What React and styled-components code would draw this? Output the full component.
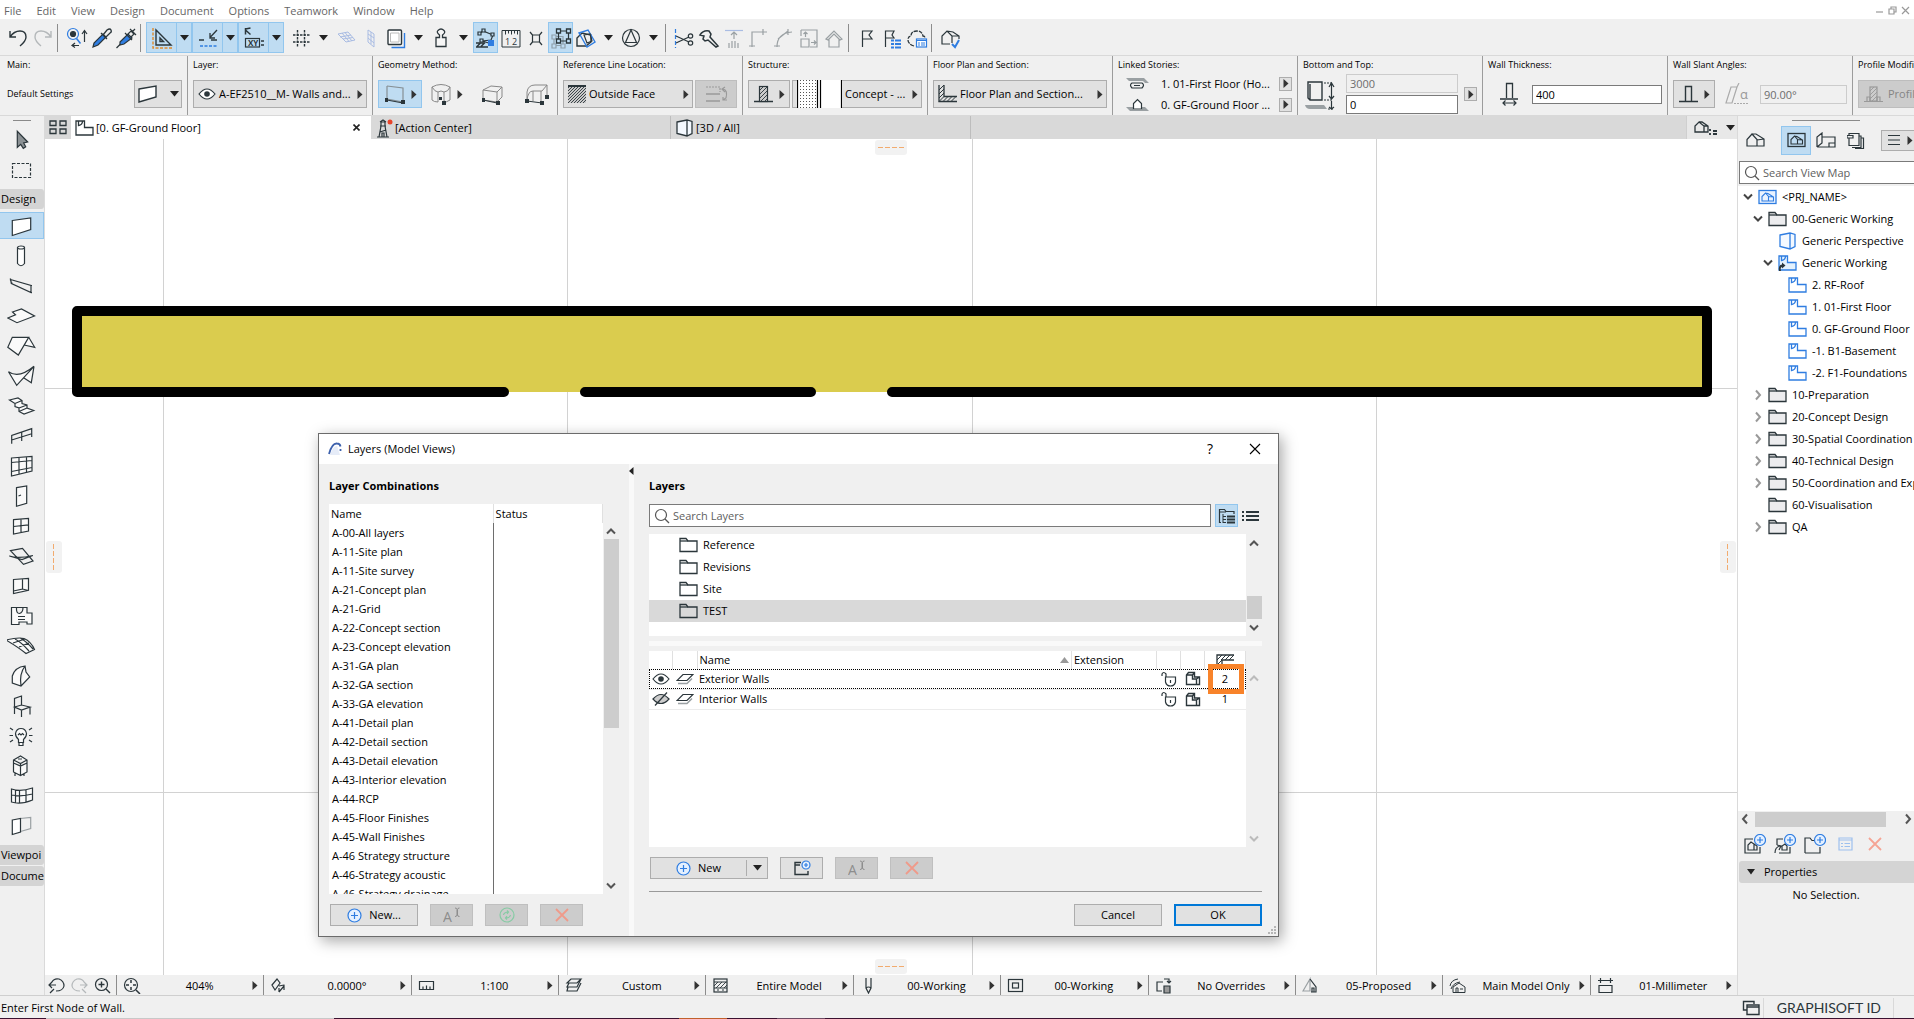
import React from "react";
import styled, { createGlobalStyle, css } from "styled-components";

const INK = "#2b363b";
const BLUE = "#2f7de1";
const SOFT = "#9aa0a3";

const GlobalStyle = createGlobalStyle`
    * {
        box-sizing: border-box;
    }
    body {
        margin: 0;
        font-family: "Segoe UI", "Open Sans", sans-serif;
        font-size: 11px;
        line-height: 16px;
        color: #000;
        background: #f0f0f0;
        overflow: hidden;
    }
    button, input {
        font: inherit;
        color: inherit;
        border-radius: 0;
        margin: 0;
    }
    button {
        padding: 0;
        border: 0;
        background: none;
        display: flex;
        align-items: center;
        justify-content: center;
        white-space: nowrap;
        flex: none;
    }
    svg {
        display: block;
        flex: none;
    }
`;

const Svg = ({ w = 24, h = 24, color = INK, weight = 1.2, children }) => (
    <svg
        width={w}
        height={h}
        viewBox={`0 0 ${w} ${h}`}
        fill="none"
        stroke={color}
        strokeWidth={weight}
        aria-hidden="true"
    >
        {children}
    </svg>
);

const Caret = () => <Svg w={9} h={6}><path d="M0 0h9L4.500 5.500z" fill="#222" stroke="none" /></Svg>;
const Play = () => <Svg w={6} h={9}><path d="M0.500 0v9L5.500 4.500z" fill="#333" stroke="none" /></Svg>;

const Chevron = ({ dir = "down", color = "#555" }) => {
    const paths = {
        down: "M2 3.500l4 4 4-4",
        up: "M2 8.500l4-4 4 4",
        left: "M8 1.500l-4 4.500 4 4.500",
        right: "M4 1.500l4 4.500-4 4.500"
    };
    return <Svg w={12} h={12} color={color} weight={2}><path d={paths[dir]} /></Svg>;
};

const Folder = ({ w = 19, fill = "#ececee" }) => (
    <Svg w={w} h={16} weight={1.3}>
        <path d="M1 14.500V1.500h6l2 2.500h9v10.500z" fill={fill} />
        <path d="M1 4h8" />
    </Svg>
);

const Plan = ({ color = BLUE, fill = "#fff", link }) => (
    <Svg w={19} h={16} color={color} weight={1.3}>
        <path d="M1 1h8.500v6.500H18v7.500H1z" fill={fill} />
        <path d="M3.500 1v4.500Q7.500 5 7.500 1" />
        {link && <path d="M1 16q-1-6 3-6.500V7.500l3.500 3L4 13.500V12q-2 .5-1 4z" fill={INK} stroke="none" />}
    </Svg>
);

const FramedHouse = ({ color = INK, fill = "none" }) => (
    <Svg w={19} h={16} color={color} weight={1.3}>
        <rect x="1" y="1.500" width="17" height="13" fill={fill} />
        <path d="M4 12V7.500l3.500-3.500 3 3.500V12zM7.500 4l2.500.5L15.500 8v4h-5M10.500 7.500l5 .5" strokeWidth="1.100" />
    </Svg>
);

const Magnifier = () => (
    <Svg w={16} h={16} color="#555"><circle cx="7" cy="7" r="5.500" /><path d="M11 11l4 4" /></Svg>
);

const Eye = () => (
    <Svg w={18} h={14}>
        <path d="M1 7q8-10 16 0q-8 10-16 0z" fill="#fff" />
        <circle cx="9" cy="7" r="2.800" fill={INK} stroke="none" />
    </Svg>
);

const EyeOff = () => (
    <Svg w={18} h={14}>
        <path d="M1 7q8-9 16 0q-8 9-16 0z" fill="#ccc" />
        <path d="M3 13.500L15 .5" />
    </Svg>
);

const PlusCircle = () => (
    <Svg w={15} h={15} color={BLUE}><circle cx="7.500" cy="7.500" r="6.500" fill="#e4f0ff" /><path d="M7.500 4v7M4 7.500h7" /></Svg>
);

const Cross = ({ color = "#ef9a8a" }) => (
    <Svg w={14} h={14} color={color} weight={1.800}><path d="M1 1l12 12M13 1L1 13" /></Svg>
);

const Rename = () => (
    <Svg w={18} h={16} color="#8d8d8d">
        <path d="M12 1q2 0 2 1.500V8q0 1.500-2 1.500M16.500 1q-2 0-2 1.500V8q0 1.500 2 1.500" strokeWidth="1" />
        <text x="0" y="15" fontSize="14" fill="#8d8d8d" stroke="none">A</text>
    </Svg>
);

const Hatch = ({ x, y, w, h, step = 4 }) => {
    let d = "";
    for (let s = step; s < w + h; s += step) {
        const x1 = Math.min(s, w), y1 = s - x1;
        const y2 = Math.min(s, h), x2 = s - y2;
        d += `M${x + x1} ${y + y1}L${x + x2} ${y + y2}`;
    }
    return <path d={d} strokeWidth="0.900" />;
};

/* main toolbar */
const toolIcons = {
    undo: <path d="M4 5v6h6M4 11Q8 5 14 5q6 0 6 6 0 4-6 9" strokeWidth="1.400" />,
    redo: <path d="M20 5v6h-6M20 11Q16 5 10 5q-6 0-6 6 0 4 6 9" stroke="#b4b8ba" strokeWidth="1.400" />,
    find: <>
        <circle cx="9" cy="8" r="5.500" stroke={BLUE} /><circle cx="9" cy="8" r="2.500" fill={INK} />
        <path d="M12.500 12.500l4 5" stroke={BLUE} strokeWidth="1.600" />
        <path d="M20.500 16V5M18 8l2.500-3.500L23 8M8 19.500h7M11 17l-3 2.500 3 2" />
    </>,
    dropper: <>
        <path d="M4 21l1-4L14 8l3 3-8 8z" fill={BLUE} /><path d="M12 7l6 6M14 9l4-5q3-2 4 0 1 2-1 3l-5 5" strokeWidth="1.300" />
    </>,
    inject: <>
        <path d="M2.500 22l4-4" /><path d="M6 16L14 8l4 4-8 6-4 1z" fill={BLUE} />
        <path d="M11 7l7 7M14 8l3-3 3 3-3 3M16 3l6 6M18 6l3-3" />
    </>,
    guide: <>
        <path d="M3 2v20h19" stroke="#e08a2c" strokeDasharray="3 1.500" strokeWidth="1.400" />
        <path d="M6 4v15h15zM10 12v3.500h3.500z" strokeWidth="1.400" />
    </>,
    snap: <>
        <path d="M3 14h5M15 14h6M14 11.500L21 4M14 7v5h5" strokeWidth="1.300" />
        <path d="M4 20h17" stroke={BLUE} strokeWidth="1.400" strokeDasharray="3 1.500" />
    </>,
    tracker: <>
        <path d="M3.500 8.500V2M3.500 3l5-1M3.500 4l5 4.500" strokeWidth="1.500" />
        <rect x="3.500" y="12.500" width="14" height="8.500" />
        <text x="6" y="20" fontSize="8" fontWeight="bold" fill={INK} stroke="none">XY</text>
        <path d="M19 15h3M19 19h3" strokeWidth="1.300" />
    </>,
    grid: <path d="M8.500 4v17M15.500 4v17M4 9h17M4 16h17" strokeWidth="1.400" strokeDasharray="2.500 1" />,
    planGrid: <path d="M4 8l10-2 7 8-9 2zM8 7l7 8.500M11 6.500l7 8.500M6 11l11-2M9 13l10-1.500" stroke="#a9bce3" strokeWidth="1" />,
    wallGrid: <path d="M9 4l6 4v13l-6-5zM12 6v12M9 8l6 4M9 12l6 5" stroke="#a9bce3" strokeWidth="1" />,
    trace: <>
        <path d="M20.500 7v14.500H7.500" stroke={BLUE} strokeWidth="1.400" /><rect x="4" y="4" width="13.500" height="14.500" rx="1" fill="#fff" strokeWidth="1.400" />
        <path d="M6.500 7v9h8.500V7z" stroke="#bbb" strokeWidth="1" />
    </>,
    weight: <path d="M10.500 11.500V9Q7 6 9 4.500q3-3 6 0 2 2-1.500 4.500v2.500h3.500v9H7v-9z" strokeWidth="1.300" fill="#f6f6f6" />,
    suspend: <>
        <path d="M5 8l4-3 10 4-2 5-9 1M8 15l10 3" />
        <path d="M4 6h3v3H4zM17 7h3v3h-3zM6 13h3v3H6zM8 3h3v3H8z" fill="#bfdcf2" />
        <path d="M2 21h12M3 20.500l4-4M7 20.500l4-4M2 17h8" strokeWidth="1.500" /><path d="M14 14h6v6h-6z" fill={BLUE} stroke="none" />
    </>,
    ruler: <>
        <path d="M3 4.500h18M3 4.500V21h18V4.500M6.500 4.500v4M9.500 4.500v3M12.500 4.500v4M15.500 4.500v3M18.500 4.500v4" strokeWidth="1" strokeDasharray="none" />
        <text x="6" y="19" fontSize="9" fill={INK} stroke="none">1</text>
        <text x="13" y="19" fontSize="9" fill={INK} stroke="none">2</text>
    </>,
    explode: <path d="M8.500 9h7v7h-7zM6 6l2.500 3M18 6l-2.500 3M6 19l2.500-3M18 19l-2.500-3" />,
    group: <>
        <path d="M5 10.500h9v9H5z" stroke="#8fa0ab" /><path d="M3 9h4v4H3zM12 18h4v4h-4zM3 18h4v4H3z" stroke="#8fa0ab" fill="#bfdcf2" />
        <path d="M9.500 5h10v10h-10z" /><path d="M7.500 3h4v4h-4zM17.500 3h4v4h-4zM17.500 13h4v4h-4zM7.500 13h4v4h-4z" fill="#bfdcf2" strokeWidth="1.300" />
    </>,
    cut3d: <>
        <path d="M3 20V12l5-5 9 2v7l-5 4z" strokeWidth="1.400" /><path d="M5 7l9-3 7 12-8 5z" stroke={BLUE} strokeWidth="1.400" />
        <path d="M10 9l6-1 2 7-5 2z" />
    </>,
    north: <><circle cx="12" cy="12" r="8.500" /><path d="M12 4l5.500 12.500h-11z" /></>,
    scissors: <>
        <path d="M3.500 3v19" stroke={BLUE} strokeDasharray="4 2" /><path d="M4 10l13 6M4 17l13-6" />
        <circle cx="18.500" cy="10" r="2.200" /><circle cx="18.500" cy="17" r="2.200" />
    </>,
    axe: <path d="M3 9q3-5 9-4l2 3-1 3 8 9-2 1-8-7-3 1-2-2 1-3z" strokeWidth="1.500" />,
    liftOff: <><path d="M3 4.500h18" stroke="#a9bce3" /><path d="M12 13V6M9 9l3-3 3 3M7 17v5M10 15v7M13 15v7M16 17v5" stroke={SOFT} /></>,
    corner: <path d="M5 21V6h15M16 3v6M2 20h6" stroke={SOFT} />,
    fillet: <path d="M5 21Q5 7 20 6M16 3v6M2 20h6M6 13l10-8" stroke={SOFT} />,
    resize: <path d="M4 4h16v17h-7M4 13h8v8H4zM4 4v6M8.500 11V6M6.500 8l2-2 2 2M14 16.500h5M17 14.500l2 2-2 2" stroke={SOFT} />,
    homeGray: <path d="M4 13l8-8 8 8-2 1-6-6-6 6zM7 13.500V21h10v-7.500" stroke={SOFT} />,
    flag: <path d="M7.500 21V5H17l-3 4 3 4H7.500" />,
    flagList: <>
        <path d="M5.500 21V5H14l-2 4 2 3H5.500" /><path d="M11 14.500h3M15 14.500h6M11 18h3M15 18h6M11 21.500h3M15 21.500h6" stroke={BLUE} strokeWidth="2" />
    </>,
    cloud: <>
        <path d="M9 20q-6-2-6-6 0-4 3-4 0-5 6-5 5 0 6 5 2 0 2 2" strokeWidth="1.300" strokeDasharray="4 1" />
        <rect x="11.500" y="13" width="10" height="8" stroke={BLUE} fill="#fff" /><path d="M11.500 14.500h10M13 17h2M16 17h4M13 19h2M16 19h4" stroke={BLUE} strokeWidth="1" />
    </>,
    houseCheck: <>
        <path d="M12 18H4v-8l5-5 5 5v7M9 5l6 1 6 4v3M14 10l7 0" /><path d="M14 18l3 3 4-7" stroke={BLUE} strokeWidth="2" />
    </>
};

const tools = [
    "undo", "redo", "|", "find", "dropper", "inject", "|",
    "*guide", "*snap", "*tracker", " ", "grid+", "planGrid", "wallGrid", "trace+", "weight+",
    "!suspend", "ruler", "explode", "!group", "cut3d+", "north+", "|",
    "scissors", "axe", "liftOff", "corner", "fillet", "resize", "homeGray", "|",
    "flag", "flagList", "cloud", "|", "houseCheck"
];

const Page = styled.div`
    height: 100vh;
    display: flex;
    flex-direction: column;
    position: relative;
`;

const MenuBar = styled.nav`
    display: flex;
    height: 19px;
    background: #fff;
    padding: 2px 4px 0;
    gap: 15px;
    align-items: center;
    a {
        color: #666;
        text-decoration: none;
    }
    .window-buttons {
        margin-left: auto;
        display: flex;
        gap: 4px;
    }
`;

const Toolbar = styled.div`
    display: flex;
    align-items: center;
    height: 37px;
    padding: 1px 5px 0;
    border-bottom: 1px solid #d9d9d9;
`;

const ToolButton = styled.button`
    width: ${p => p.$narrow ? "15px" : p.$wide ? "31px" : "25px"};
    height: 31px;
    ${p => p.$on && css`
        background: #bfdcf2;
        border: 1px solid #92c6ee;
    `}
    ${p => p.$on && p.$narrow && css`
        border-left: 0;
    `}
`;

const CaretButton = styled.button`
    width: 20px;
    height: 30px;
`;

const ToolSeparator = styled.span`
    width: 1px;
    height: 28px;
    background: #8c8c8c;
    margin: 0 5px 0 2px;
`;

const ToolGap = styled.span`
    width: 4px;
`;

const Tool = ({ id }) => {
    if (id === "|") return <ToolSeparator />;
    if (id === " ") return <ToolGap />;
    const name = id.replace(/[*+!]/g, "");
    const icon = <Svg>{toolIcons[name]}</Svg>;
    if (id[0] === "*") {
        return <>
            <ToolButton $on $wide aria-label={name}>{icon}</ToolButton>
            <ToolButton $on $narrow aria-label={name + " options"}><Caret /></ToolButton>
        </>;
    }
    return <>
        <ToolButton $on={id[0] === "!"} aria-label={name}>{icon}</ToolButton>
        {id.endsWith("+") && <CaretButton aria-label={name + " options"}><Caret /></CaretButton>}
    </>;
};

/* info box */
const InfoBox = styled.div`
    display: flex;
    height: 60px;
    border-bottom: 1px solid #d9d9d9;
    overflow: hidden;
`;

const InfoSection = styled.section`
    width: ${p => p.$first ? "188px" : "185px"};
    flex: none;
    padding: 0 5px ${p => p.$first ? "0 7px" : ""};
    border-right: 1px solid #9c9c9c;
    display: flex;
    flex-direction: column;
`;

const InfoTitle = styled.h2`
    margin: 0;
    padding-top: 2px;
    font-size: 9px;
    font-weight: 400;
    line-height: 14px;
    white-space: nowrap;
`;

const InfoRow = styled.div`
    display: flex;
    align-items: center;
    flex: 1;
    gap: ${p => p.$gap || 2}px;
    padding-top: 1px;
    small {
        font-size: 9px;
        flex: 1;
    }
`;

const Stack = styled.div`
    display: flex;
    flex-direction: column;
    flex: 1;
    gap: 2px;
`;

const BoxButton = styled.button`
    height: 28px;
    padding: 0 3px 0 4px;
    gap: 3px;
    border: 1px solid ${p => p.$off ? "#bdbdbd" : p.$on ? "#92c6ee" : "#adadad"};
    background: ${p => p.$off ? "#cccccc" : p.$on ? "#bfdcf2" : "#e1e1e1"};
    color: ${p => p.$off ? "#858585" : "#000"};
    ${p => p.$grow && "flex: 1; min-width: 0;"}
    ${p => p.$width && `width: ${p.$width}px; gap: 6px;`}
    span {
        flex: 1;
        text-align: left;
    }
`;

const PlainButton = styled.button`
    height: 28px;
    width: ${p => p.$width || 44}px;
    gap: 5px;
`;

const MiniButton = styled.button`
    width: 13px;
    height: 14px;
    border: 1px solid #adadad;
    background: #e1e1e1;
`;

const Field = styled.input`
    height: 19px;
    width: 100%;
    min-width: 0;
    padding: 0 3px;
    border: 1px solid #7a7a7a;
    background: #fff;
    &:disabled {
        border-color: #ccc;
        background: #f0f0f0;
        color: #6d6d6d;
    }
`;

const StoryLine = styled.div`
    display: flex;
    align-items: center;
    height: 19px;
    padding: 0 0 0 8px;
    span {
        flex: 1;
        padding-left: 12px;
        white-space: nowrap;
    }
`;

const SlotDivider = styled.i`
    width: 1px;
    height: 22px;
    background: #adadad;
`;

const WallShape = () => <Svg w={20} h={20} weight={1.4}><path d="M1 5l17-3v11L1 18z" fill="#fff" /></Svg>;

const InfoSections = () => (
    <InfoBox>
        <InfoSection $first>
            <InfoTitle>Main:</InfoTitle>
            <InfoRow>
                <small>Default Settings</small>
                <BoxButton $width={48} aria-label="Default wall"><WallShape /><SlotDivider /><Caret /></BoxButton>
            </InfoRow>
        </InfoSection>
        <InfoSection>
            <InfoTitle>Layer:</InfoTitle>
            <InfoRow><BoxButton $grow><Eye /><span>A-EF2510__M- Walls and...</span><Play /></BoxButton></InfoRow>
        </InfoSection>
        <InfoSection>
            <InfoTitle>Geometry Method:</InfoTitle>
            <InfoRow>
                <BoxButton $on $width={44} aria-label="Straight">
                    <Svg w={20} h={22} color="#868f94"><path d="M2 3l16 2v14" /><path d="M2 3v13l16 3" /><path d="M2 17l16 3" stroke={INK} /><path d="M0 15h3v4H0zM16 17h4v4h-4z" fill={INK} stroke="none" /></Svg>
                    <Play />
                </BoxButton>
                <PlainButton aria-label="Curved">
                    <Svg w={22} h={22} color="#888" weight={1}><path d="M2 4q9-5 18 0v13q-4 3-6 1V9q-3-2-6 0v10q-4 0-6-2zM2 4q3 5 6 5M20 4q-2 5-6 5" /><path d="M9 14h3v3H9zM12 18h4v4h-4z" fill={INK} stroke="none" /></Svg>
                    <Play />
                </PlainButton>
                <PlainButton $width={45} aria-label="Trapezoid">
                    <Svg w={24} h={22} color="#888" weight={1}><path d="M2 7l8-4 11 1v10l-5 5-14-2zM2 7l14 2 5-5M16 9v10" /><path d="M2 17l14 3" stroke={INK} /><path d="M1 15h3v4H1zM15 18h4v4h-4z" fill={INK} stroke="none" /></Svg>
                </PlainButton>
                <PlainButton $width={40} aria-label="Polygon">
                    <Svg w={26} h={22} color="#888" weight={1}><path d="M3 17V9q1-7 8-7h12l-5 6H9q-5 0-6 9M17 8v12M23 2v11M9 8v10" /><path d="M3 18l15 2" stroke={INK} /><path d="M1 16h4v4H1zM16 18h4v4h-4zM21 12h4v4h-4z" fill={INK} stroke="none" /></Svg>
                </PlainButton>
            </InfoRow>
        </InfoSection>
        <InfoSection>
            <InfoTitle>Reference Line Location:</InfoTitle>
            <InfoRow>
                <BoxButton $grow>
                    <Svg w={18} h={18}><rect width="18" height="18" fill="#c9c9c9" stroke="none" /><Hatch x={0} y={0} w={18} h={18} step={3} /><path d="M0 1h18" strokeWidth="2" /></Svg>
                    <span>Outside Face</span><Play />
                </BoxButton>
                <BoxButton $off $width={42} disabled aria-label="Flip">
                    <Svg w={24} h={18} color="#999"><path d="M1 9h14M1 16h14" strokeWidth="1.600" /><path d="M1 2h14v5" strokeDasharray="2 1" /><path d="M18 4q5 1 3 9l-3 2M20 2l-3 2 3 3M18 12v3h4" /></Svg>
                </BoxButton>
            </InfoRow>
        </InfoSection>
        <InfoSection>
            <InfoTitle>Structure:</InfoTitle>
            <InfoRow>
                <BoxButton $width={42} aria-label="Basic structure">
                    <Svg w={19} h={18}><path d="M0 16.500h19" strokeWidth="1.500" /><rect x="5.500" y="1.500" width="8" height="15" fill="#ccc" /><Hatch x={5.5} y={1.5} w={8} h={15} /></Svg>
                    <Play />
                </BoxButton>
                <BoxButton $grow>
                    <Svg w={45} h={28}>
                        <defs>
                            <pattern id="dots" width="3" height="3" patternUnits="userSpaceOnUse"><rect width="1" height="1" fill="#555" stroke="none" /></pattern>
                        </defs>
                        <rect width="45" height="28" fill="#fff" stroke="none" />
                        <rect x="1" width="19" height="28" fill="url(#dots)" stroke="none" />
                        <path d="M.5 0v28M20.500 0v28M23.500 0v28M44.500 0v28" stroke="#000" />
                    </Svg>
                    <span>Concept - ...</span><Play />
                </BoxButton>
            </InfoRow>
        </InfoSection>
        <InfoSection>
            <InfoTitle>Floor Plan and Section:</InfoTitle>
            <InfoRow>
                <BoxButton $grow>
                    <Svg w={19} h={18}><path d="M1 0v16.500h18M6 0v11.500h13" strokeWidth="1.300" /><path d="M1 5l5-5M1 9l5-5M1 13l5-5M1 16.500l5-5M5 16.500l5-5M9 16.500l5-5M13 16.500l5-5" strokeWidth="1" /></Svg>
                    <span>Floor Plan and Section...</span><Play />
                </BoxButton>
            </InfoRow>
        </InfoSection>
        <InfoSection>
            <InfoTitle>Linked Stories:</InfoTitle>
            <InfoRow>
                <Stack>
                    <StoryLine>
                        <Svg w={23} h={14}><path d="M0 1h18l5 5h-4l-2-2H3z" fill={SOFT} stroke="none" /><path d="M12 6H6q-3 2 0 5h6M8 8.500h6M9 6h7q3 2 0 5h-4" /></Svg>
                        <span>1. 01-First Floor (Ho...</span>
                        <MiniButton aria-label="Top story"><Play /></MiniButton>
                    </StoryLine>
                    <StoryLine>
                        <Svg w={23} h={14}><path d="M0 9h7v3h9V9h3l4 4H4z" fill={SOFT} stroke="none" /><path d="M7.500 11V5.500l4-4 4 4V11z" fill="#fff" /></Svg>
                        <span>0. GF-Ground Floor ...</span>
                        <MiniButton aria-label="Home story"><Play /></MiniButton>
                    </StoryLine>
                </Stack>
            </InfoRow>
        </InfoSection>
        <InfoSection>
            <InfoTitle>Bottom and Top:</InfoTitle>
            <InfoRow $gap={6}>
                <Svg w={37} h={32}>
                    <path d="M5 4h14v18H7l-2-2zM7 6v16" strokeWidth="1.400" /><path d="M2 27h19l3 4H7q-4 0-5-4z" fill={SOFT} stroke="none" />
                    <path d="M21 5h9M21 22h9M25 31h5" strokeDasharray="2 1" /><path d="M28.500 6v15M26 9l2.500-4 2.500 4M26 18l2.500 3 2.500-3M28.500 23v8M26 29l2.500 2 2.500-2" />
                </Svg>
                <Stack>
                    <Field aria-label="Top offset" disabled defaultValue="3000" />
                    <Field aria-label="Bottom offset" defaultValue="0" />
                </Stack>
                <MiniButton aria-label="Offset options"><Play /></MiniButton>
            </InfoRow>
        </InfoSection>
        <InfoSection>
            <InfoTitle as="label" htmlFor="thickness">Wall Thickness:</InfoTitle>
            <InfoRow $gap={12}>
                <Svg w={32} h={24}><path d="M12 17h18M18.500 16V1.500h6V16" strokeWidth="1.300" /><path d="M15 21h13M17.500 18.500L15 21l2.500 2.500M25.500 18.500L28 21l-2.500 2.500" /></Svg>
                <Field id="thickness" defaultValue="400" />
            </InfoRow>
        </InfoSection>
        <InfoSection>
            <InfoTitle as="label" htmlFor="slant">Wall Slant Angles:</InfoTitle>
            <InfoRow $gap={10}>
                <BoxButton $width={42} aria-label="Vertical wall">
                    <Svg w={19} h={18}><path d="M0 16.500h19M6.500 16.500V1.500h6v15" strokeWidth="1.400" /></Svg>
                    <Play />
                </BoxButton>
                <Svg w={25} h={22} color="#aaa"><path d="M1 20L6 4h6L7 20zM12 4l2-4" /><path d="M9 20.500h15" strokeDasharray="2 1" /><text x="15" y="16" fontSize="13" fill="#999" stroke="none">α</text></Svg>
                <Field id="slant" disabled defaultValue="90.00°" />
            </InfoRow>
        </InfoSection>
        <InfoSection>
            <InfoTitle>Profile Modifiers:</InfoTitle>
            <InfoRow>
                <BoxButton $off $grow disabled>
                    <Svg w={22} h={18} color="#999"><path d="M1 16.500h19M4 16v-4h3v4M14 16v-4h3v4" /><rect x="7" y="2" width="7" height="14" /><Hatch x={7} y={2} w={7} h={14} /></Svg>
                    <span>Profile Modifiers...</span><Play />
                </BoxButton>
            </InfoRow>
        </InfoSection>
    </InfoBox>
);

/* design palette, every drawing sits on a 30 by 24 board */
const paletteIcons = {
    arrow: <path d="M10.300 3.300V19.300l3.400-3 2.600 4 2.400-1.600-2-3.700 4-1z" fill="#8b9194" />,
    marquee: <rect x="5.500" y="5.500" width="18" height="14" strokeDasharray="3 1.500" />,
    wall: <path d="M5.300 6.500L23.700 4v11.500l-18.400 6z" fill="#fff" />,
    column: <><path d="M10.500 3.500v16q3.500 4.500 7 0v-16" fill="#fff" /><ellipse cx="14" cy="3.500" rx="3.500" ry="1.500" fill="#fff" /></>,
    beam: <path d="M3.500 5.500L24 11.500v7L4.500 9.500zM3.500 4.500v2M3.500 9h2M23 11.500h2M23 18.500h2" />,
    slab: <path d="M5.500 8l9-3 13 7-17.500 6.700L.8 14l7.700-3.300z" fill="#fafafa" />,
    roof: <path d="M5.300 3.300h16.400L11.300 21 .8 13.300zM21.700 3.300l6 10L17 11" fill="#fafafa" />,
    shell: <path d="M1.500 7.700Q12 15 27 2.300L9.700 21.300zM27 2.300l-2.700 16.400L17 14" fill="#fafafa" />,
    stair: <path d="M2.500 6L11 4l4 2.500v3l5 1.500v3l6.700 2.500L17 20l-5-2.500V14l-4-1.500v-3zM8 9.500l7-3M12 14l8-3M12 17.500l8-3.500" fill="#fafafa" />,
    railing: <path d="M4.700 19.700v-8.200l20-6.800V13M14.700 8v9M4.700 16l20-6.300" />,
    curtainWall: <path d="M4.500 4L25 2.500V17L4.500 22zM12 3.500V20M19.500 3v15.500M4.500 8.500l20.500-2M4.500 17.500L25 13.500" fill="#fafafa" />,
    door: <path d="M9.500 3.700L19.700 2v17.300L9.500 22.300zM11.500 12l2.500-1" fill="#fafafa" />,
    window: <path d="M6.500 5.700l15-1.400V17l-15 3zM14 5v13.500M6.500 12.500l15-1.700" fill="#fafafa" />,
    skylight: <path d="M3.500 6.700l12-2.400L26 17l-9.500 3.300zM2.300 12q9 3 23.500-.5L15 15.500z" />,
    opening: <path d="M6.500 5.500l15-1.200v12l-15 3.200zM15.500 5v10l-9 2M15.500 15l6 1.500" fill="#fafafa" />,
    zone: <path d="M4.500 3.500h5q-.5 6 3 6 3.500-1 3.500-6h4V9h5v11h-5v-2h-8v2.500H4.500zM9.500 3.500h6M11 12.500h7M11 15.500h7" fill="#fafafa" />,
    mesh: <path d="M-1 6q12-3 18-1.500 7 3 10.500 11L19 19.500Q11 13-1 6zM8 5q6 3 14 12M13 4q6 3 13 11M6 9l12-4M12 13l10-4" fill="#fafafa" />,
    morph: <path d="M5.300 19v-7Q8 3 18 2l1 6 3.700 5L14 22zM18 2q-6 8-4 20" fill="#fafafa" />,
    object: <path d="M7.500 20V4.500L14.500 2v9M7.500 13l7-2 8.500 2-8.500 3zM23 13v7.500M14.500 16v7" />,
    lamp: <><path d="M11.500 15.500q-3-2.500-3-6 1-5 5.500-5t5.500 5q0 3.500-3 6v3h-5zM12 18.500v3h4v-3M11 11l1.500-1.500L14 11l1.500-1.500L17 11" fill="#fafafa" /><path d="M3 4l3 2M25 4l-3 2M2.500 11.500H6M25.500 11.500H22M3 18l3-2M25 18l-3-2" /></>,
    equipment: <path d="M6.500 6l7-4 6.500 4v12l-6.500 3.500-7-3.500zM6.500 6l7 3.500L20 6M13.500 9.500V21M6.500 9l7 3 6.500-3M11 5h4M8 19v3M17 20v2" fill="#fafafa" />,
    system: <path d="M4.500 5q9 3 21-1v12q-12 5-21 2zM8.500 6v12.500M12.500 6v13M19 5.500V18M4.500 11q10 2 21-1" fill="#fafafa" />,
    end: <><path d="M13.500 4.500L23.700 3.500v11l-10.200 3" stroke={SOFT} /><path d="M5.300 6l8.200-1.500v13.500l-8.200 2.500z" fill="#fff" /></>
};

const Palette = styled.aside`
    width: 45px;
    flex: none;
    border-right: 1px solid #dadada;
    display: flex;
    flex-direction: column;
`;

const Grip = styled.i`
    height: 1px;
    width: ${p => p.$width}px;
    background: #8a8a8a;
    margin: 4px auto ${p => p.$after || 0}px;
    flex: none;
`;

const PaletteButton = styled.button`
    height: 30px;
    width: 44px;
    padding-right: 1px;
`;

const PaletteActive = styled(PaletteButton)`
    height: 27px;
    margin: 3px 0 2px;
    background: #bfdcf2;
    border: 1px solid #92c6ee;
    border-left: 0;
    padding: 0;
`;

const PaletteHeader = styled.button`
    height: 20px;
    justify-content: flex-start;
    padding-left: 1px;
    background: #d4d4d4;
    border-radius: 0 3px 3px 0;
    margin-top: ${p => p.$gap || 0}px;
    width: 44px;
`;

const PaletteTools = () => (
    <Palette>
        <Grip $width={18} $after={4} />
        {["arrow", "marquee"].map(n => <PaletteButton key={n} aria-label={n}><Svg w={30}>{paletteIcons[n]}</Svg></PaletteButton>)}
        <PaletteHeader $gap={4}>Design</PaletteHeader>
        <PaletteActive aria-label="wall"><Svg w={30}>{paletteIcons.wall}</Svg></PaletteActive>
        {Object.keys(paletteIcons).slice(3).map(n => (
            <PaletteButton key={n} aria-label={n}><Svg w={30}>{paletteIcons[n]}</Svg></PaletteButton>
        ))}
        <PaletteHeader $gap={4}>Viewpoi</PaletteHeader>
        <PaletteHeader $gap={1}>Docume</PaletteHeader>
    </Palette>
);

/* tabs and drawing area */
const Workspace = styled.div`
    flex: 1;
    min-height: 0;
    display: flex;
`;

const Center = styled.main`
    flex: 1;
    min-width: 0;
    display: flex;
    flex-direction: column;
`;

const TabBar = styled.div`
    height: 23px;
    display: flex;
    background: #d9d9d9;
    flex: none;
`;

const Tab = styled.button`
    width: 300px;
    justify-content: flex-start;
    padding: 0 10px 0 4px;
    gap: 2px;
    background: ${p => p.$active ? "#fff" : "#d9d9d9"};
    border-right: 1px solid ${p => p.$active ? "#fff" : "#bdbdbd"};
    > svg:last-child:not(:first-child) {
        margin-left: auto;
    }
`;

const TabFiller = styled.div`
    flex: 1;
    border-right: 1px solid #cfcfcf;
`;

const TabIconCell = styled.button`
    width: ${p => p.$width}px;
    gap: 9px;
    padding-left: ${p => p.$light ? 5 : 0}px;
    background: ${p => p.$light ? "#e8e8e8" : "#d9d9d9"};
`;

const Canvas = styled.div`
    flex: 1;
    min-height: 0;
    background: #fff;
    position: relative;
    overflow: hidden;
    > svg {
        position: absolute;
        left: 0;
        top: 0;
    }
`;

const EdgeHandle = styled.div`
    position: absolute;
    display: flex;
    align-items: center;
    justify-content: center;
    background: #f2f2f2;
    border-radius: 3px;
    ${p => (p.$edge === "top" || p.$edge === "bottom") ? css`
        width: 32px;
        height: 15px;
        left: calc(50% - 16px);
    ` : css`
        width: 16px;
        height: 32px;
        top: calc(50% - 16px);
    `}
    ${p => p.$edge}: 1px;
`;

const Handle = ({ edge }) => (
    <EdgeHandle $edge={edge}>
        {edge === "top" || edge === "bottom"
            ? <Svg w={26} h={2} color="#f2ab6e" weight={1}><path d="M0 .5h26" strokeDasharray="5 2" /></Svg>
            : <Svg w={2} h={26} color="#f2ab6e" weight={1}><path d="M.5 0v26" strokeDasharray="5 2" /></Svg>}
    </EdgeHandle>
);

const Drawing = () => (
    <Canvas>
        <svg width="100%" height="100%" aria-hidden="true">
            <path d="M118.500 0v2000M522.500 0v2000M927.500 0v2000M1331.500 0v2000M0 249.500h4000M0 653.500h4000" stroke="#d2d2d2" fill="none" />
            <path d="M32 172H1662V253H32z" fill="#dacc4e" />
            <path d="M459 253H32V172H1662V253H847M540 253H766" stroke="#000" strokeWidth="10" strokeLinecap="round" strokeLinejoin="round" fill="none" />
        </svg>
        {["top", "bottom", "left", "right"].map(e => <Handle key={e} edge={e} />)}
    </Canvas>
);

/* quick options */
const QuickBar = styled.div`
    height: 20px;
    flex: none;
    display: flex;
    align-items: center;
    background: #f0f0f0;
`;

const QuickTools = styled.div`
    width: 72px;
    flex: none;
    display: flex;
    align-items: center;
    border-right: 1px solid #8c8c8c;
    button {
        width: 23px;
        height: 20px;
    }
`;

const QuickCell = styled.button`
    flex: 1;
    height: 20px;
    padding-top: 1px;
    border-right: 1px solid #8c8c8c;
    &:last-child {
        border-right: 0;
    }
    i {
        width: 30px;
        display: flex;
        justify-content: center;
    }
    span {
        flex: 1;
    }
    > svg {
        margin-right: 5px;
    }
`;

const quickIcons = {
    fit: <><circle cx="8" cy="8" r="6.500" /><path d="M13 13l4 4M8 3v3M8 10v3M3 8h3M10 8h3" strokeWidth="1.500" /></>,
    angle: <path d="M2 8l5-6 3 4-5 7zM9 15l5-6v4M14 8l-5 1M9 15v-4" />,
    scale: <path d="M1.500 4.500h14v8h-14zM5 12.500V9.500M8.500 12.500V8.500M12 12.500V9.500" />,
    layers: <path d="M6 2h10l-4 4H2zM4 6l-2 4h10l4-8M3 10l-1 4h10l4-8" />,
    model: <><rect x="2" y="2" width="13" height="13" /><Hatch x={2} y={5} w={13} h={6} /><path d="M2 5h13M2 11h13M5 13h2M10 13h2" /></>,
    pen: <path d="M6 1v10l2.500 5 2.500-5V1M6 11q2.500-2 5 0" />,
    view: <><rect x="1.500" y="2.500" width="14" height="12" /><rect x="5.500" y="6" width="6" height="5" /></>,
    override: <><path d="M8 5H2v9h5M9 2h5v4M12 4l2 2 2-2" /><path d="M9 9h6v7H9z" fill="#999" /></>,
    renovation: <><path d="M1 14L8 2v12z" stroke={SOFT} /><path d="M8 2l6 8v5H9M10 15v-4h2v4" /></>,
    partial: <path d="M1 9q1-6 8-7M2 12q2-6 9-7M4 15V10l6-4 6 4v5.500H4zM7 15v-4h2v4M11 12h3" strokeWidth="1" />,
    dimension: <path d="M1 3.500h15M3.500 1v5M13.500 1v5M2 8.500h13v7H2z" />
};

const quickCells = [
    ["fit", "404%"], ["angle", "0.0000°"], ["scale", "1:100"], ["layers", "Custom"], ["model", "Entire Model"],
    ["pen", "00-Working"], ["view", "00-Working"], ["override", "No Overrides"], ["renovation", "05-Proposed"],
    ["partial", "Main Model Only"], ["dimension", "01-Millimeter"]
];

const QuickOptions = () => (
    <QuickBar>
        <QuickTools>
            <button aria-label="Previous view"><Svg w={17} h={17}><path d="M4 5q2-4 7-3 5 2 5 7-1 5-8 5M1 8h7M4 5L1 8l3 3M6 12l-4 4" /></Svg></button>
            <button aria-label="Next view"><Svg w={17} h={17} color="#b4b8ba"><path d="M13 5q-2-4-7-3-5 2-5 7 1 5 8 5M16 8H9M13 5l3 3-3 3M11 12l4 4" /></Svg></button>
            <button aria-label="Zoom in"><Svg w={17} h={17}><circle cx="7.500" cy="7.500" r="6" /><path d="M12 12l4 4M7.500 4.500v6M4.500 7.500h6" strokeWidth="1.400" /></Svg></button>
        </QuickTools>
        {quickCells.map(([icon, text], i) => (
            <QuickCell key={i}><i><Svg w={18} h={17}>{quickIcons[icon]}</Svg></i><span>{text}</span><Play /></QuickCell>
        ))}
    </QuickBar>
);

/* navigator */
const Navigator = styled.aside`
    width: 177px;
    flex: none;
    border-left: 1px solid #dadada;
    display: flex;
    flex-direction: column;
    overflow: hidden;
`;

const NavTabs = styled.div`
    display: flex;
    align-items: center;
    height: 37px;
    padding: 1px 0 0 2px;
    flex: none;
    i {
        width: 1px;
        height: 19px;
        background: #a0a0a0;
        margin: 0 6px 0 5px;
    }
`;

const NavTab = styled.button`
    width: 30px;
    height: 29px;
    ${p => p.$on && css`
        background: #bfdcf2;
        border: 1px solid #92c6ee;
    `}
`;

const NavMenu = styled.button`
    width: 42px;
    height: 21px;
    margin-left: 10px;
    padding-right: 4px;
    gap: 6px;
    border: 1px solid #adadad;
    background: #e1e1e1;
`;

const SearchBox = styled.label`
    display: flex;
    align-items: center;
    flex: ${p => p.$grow ? 1 : "none"};
    height: 23px;
    padding-left: 4px;
    gap: 3px;
    border: 1px solid #7a7a7a;
    background: #fff;
    ${p => p.$bleed && "margin: 3px -4px 2px 1px;"}
    input {
        flex: 1;
        min-width: 0;
        border: 0;
        outline: 0;
        padding: 0;
        background: none;
    }
    input::placeholder {
        color: #606060;
        opacity: 1;
    }
`;

const Tree = styled.ul`
    list-style: none;
    margin: 0;
    padding: 0;
    background: #fff;
    flex: 1;
    min-height: 0;
    overflow: hidden;
`;

const TreeRow = styled.li`
    display: flex;
    align-items: center;
    height: 22px;
    padding-left: ${p => 4 + p.$level * 10}px;
    gap: 4px;
    white-space: nowrap;
    background: ${p => p.$selected ? "#d9d9d9" : "none"};
    > i {
        width: 12px;
        flex: none;
    }
    span {
        padding-left: 1px;
    }
`;

const Box3D = ({ color = BLUE }) => (
    <Svg w={19} h={18} color={color} weight={1.3}><path d="M2 3l10-2 5 1.500v12L12 17 2 14.500zM12 1v16" fill="#f4f9ff" /></Svg>
);

const views = [
    [0, "<PRJ_NAME>", "down", <FramedHouse color={BLUE} fill="#eaf3ff" />],
    [1, "00-Generic Working", "down", <Folder />],
    [2, "Generic Perspective", null, <Box3D />],
    [2, "Generic Working", "down", <Plan fill="#e3f1fd" link />],
    [3, "2. RF-Roof", null, <Plan />],
    [3, "1. 01-First Floor", null, <Plan />],
    [3, "0. GF-Ground Floor", null, <Plan />],
    [3, "-1. B1-Basement", null, <Plan />],
    [3, "-2. F1-Foundations", null, <Plan />],
    [1, "10-Preparation", "right", <Folder />],
    [1, "20-Concept Design", "right", <Folder />],
    [1, "30-Spatial Coordination", "right", <Folder />],
    [1, "40-Technical Design", "right", <Folder />],
    [1, "50-Coordination and Export", "right", <Folder />],
    [1, "60-Visualisation", null, <Folder />],
    [1, "QA", "right", <Folder />]
];

const HScroll = styled.div`
    height: 16px;
    flex: none;
    display: flex;
    align-items: center;
    justify-content: space-between;
    padding-left: 1px;
    i {
        height: 15px;
        flex: 1;
        margin: 0 16px 0 4px;
        background: #cdcdcd;
    }
`;

const NavActions = styled.div`
    display: flex;
    height: 34px;
    align-items: center;
    flex: none;
    padding-left: 2px;
    button {
        width: 30px;
        height: 24px;
    }
`;

const PanelHeader = styled.button`
    height: 22px;
    justify-content: flex-start;
    gap: 9px;
    padding-left: 8px;
    margin-left: 1px;
    background: #d4d4d4;
    border-radius: 3px 0 0 3px;
`;

const EmptyNote = styled.p`
    margin: 4px 0 0;
    height: 108px;
    text-align: center;
`;

const NewBadge = () => <><circle cx="16" cy="6" r="5.500" stroke={BLUE} fill="#e4f0ff" /><path d="M16 3v6M13 6h6" stroke={BLUE} /></>;

const NavigatorPanel = () => (
    <Navigator>
        <Grip $width={68} />
        <NavTabs>
            <NavTab aria-label="Project map"><Svg w={19} h={16}><path d="M1 14V7.500L6 2l5 5.500V14zM6 2h4l8 5v7h-7M11 8l7-1" /></Svg></NavTab>
            <i />
            <NavTab $on aria-label="View map"><FramedHouse /></NavTab>
            <NavTab aria-label="Layout book"><Svg w={20} h={16}><path d="M1 15V5l5-4v10l-5 4M6 5h13v10H1M13 15V11h6" /></Svg></NavTab>
            <NavTab aria-label="Publisher"><Svg w={18} h={17}><path d="M2 3.500V1.500h10v12H2V6M0 3.500h6v2.500H0zM12 4h2v11.500H5M14 6h2.500v10.500H8" /></Svg></NavTab>
            <NavMenu aria-label="Navigator menu"><Svg w={14} h={12}><path d="M1 1.500h12M1 6h12M1 10.500h12" /></Svg><Play /></NavMenu>
        </NavTabs>
        <SearchBox $bleed><Magnifier /><input placeholder="Search View Map" aria-label="Search View Map" /></SearchBox>
        <Tree>
            {views.map(([level, text, open, icon]) => (
                <TreeRow key={text} $level={level}>
                    {open ? <Chevron dir={open} color={open === "down" ? "#444" : "#999"} /> : <i />}
                    {icon}
                    <span>{text}</span>
                </TreeRow>
            ))}
        </Tree>
        <HScroll><Chevron dir="left" /><i /><Chevron dir="right" /></HScroll>
        <NavActions>
            <button aria-label="Save view"><Svg w={22} h={20}><path d="M9 5H1v14h15v-6M4 16v-5l3-3 3 2v6zM10 10l3 2v4h-3" /><NewBadge /></Svg></button>
            <button aria-label="Clone folder"><Svg w={22} h={20}><path d="M9 5H3v6M5 19h11v-6M1 19q0-6 5-7M3 11l4 1-2 4M8 16v-4l3-2 2 2v4z" /><NewBadge /></Svg></button>
            <button aria-label="New folder"><Svg w={22} h={20}><path d="M1 19V4h5l2 2.500h2M1 19h15v-6" /><NewBadge /></Svg></button>
            <button aria-label="Settings" disabled><Svg w={15} h={14} color="#9dc0ee"><path d="M1 1h13v12H1zM1 3h13M3 6.500h2M6.500 6.500H12M3 9.500h2M6.500 9.500H12" /></Svg></button>
            <button aria-label="Delete" disabled><Cross color="#f5a494" /></button>
        </NavActions>
        <PanelHeader><Svg w={8} h={6}><path d="M0 0h8L4 5.500z" fill="#222" stroke="none" /></Svg>Properties</PanelHeader>
        <EmptyNote>No Selection.</EmptyNote>
    </Navigator>
);

const StatusBar = styled.footer`
    height: 23px;
    flex: none;
    border-top: 1px solid #cfcfcf;
    display: flex;
    align-items: center;
    padding: 1px 20px 0 1px;
    > svg {
        margin-left: auto;
    }
    strong {
        font-family: Lato, sans-serif;
        font-size: 14px;
        font-weight: 400;
        color: ${INK};
        border: solid #d9d9d9;
        border-width: 0 1px;
        margin-left: 3px;
        padding: 2px 12px 2px 13px;
    }
`;

const TaskStrip = styled.div`
    height: 1px;
    flex: none;
    background: linear-gradient(90deg, #3b1230 46px, #c8c8c8 46px 334px, #3b1230 334px 679px, #c0602c 679px 727px, #3b1230 727px 777px, #6d4a62 777px 825px, #3b1230 825px);
`;

/* dialog */
const Dialog = styled.section`
    position: absolute;
    left: 318px;
    top: 433px;
    width: 961px;
    height: 504px;
    display: flex;
    flex-direction: column;
    background: #f0f0f0;
    border: 1px solid #6b6b6b;
    box-shadow: 3px 4px 14px rgba(0, 0, 0, 0.35);
`;

const TitleBar = styled.header`
    height: 30px;
    flex: none;
    display: flex;
    align-items: center;
    background: #fff;
    padding: 0 8px 0 9px;
    h1 {
        flex: 1;
        margin: 0 0 0 6px;
        font-size: 11px;
        font-weight: 400;
    }
    button {
        width: 30px;
        height: 28px;
        margin-left: 15px;
        font-size: 14px;
    }
`;

const DialogBody = styled.div`
    flex: 1;
    min-height: 0;
    display: flex;
`;

const CombinationsPane = styled.div`
    width: 310px;
    flex: none;
    display: flex;
    flex-direction: column;
    padding: 14px 10px 10px;
`;

const PaneSplitter = styled.div`
    width: 5px;
    background: #f9f9f9;
    padding-top: 3px;
`;

const LayersPane = styled.div`
    flex: 1;
    min-width: 0;
    display: flex;
    flex-direction: column;
    padding: 14px 16px 10px 15px;
`;

const PaneTitle = styled.h3`
    margin: 0 0 10px;
    font-size: 11px;
    font-weight: 700;
    line-height: 16px;
`;

const ListFrame = styled.div`
    display: flex;
    min-height: 0;
    ${p => p.$height ? `flex: none; height: ${p.$height}px;` : "flex: 1;"}
`;

const ListArea = styled.div`
    flex: 1;
    min-width: 0;
    overflow: hidden;
    background: #fff;
`;

const DataTable = styled.table`
    width: 100%;
    table-layout: fixed;
    border-collapse: collapse;
    th, td {
        padding: 0 2px;
        text-align: left;
        font-weight: 400;
        white-space: nowrap;
    }
    th {
        height: 19px;
        border-right: 1px solid #e0e0e0;
    }
`;

const CombinationTable = styled(DataTable)`
    td {
        height: 19px;
        padding-left: 3px;
    }
    td:first-child {
        border-right: 1px solid #6e6e6e;
    }
`;

const LayerTable = styled(DataTable)`
    th {
        height: 18px;
    }
    td {
        height: 20px;
        border-bottom: 1px solid #ececec;
    }
    td > svg, th > svg {
        margin: 0 auto;
    }
    .sorted {
        display: flex;
        align-items: center;
        justify-content: space-between;
    }
`;

const LayerRow = styled.tr`
    ${p => p.$focused && css`
        outline: 1px dotted #000;
        outline-offset: -1px;
    `}
    td:last-child {
        text-align: center;
        position: relative;
    }
`;

const Marker = styled.i`
    position: absolute;
    left: 3px;
    top: -5px;
    width: 36px;
    height: 30px;
    border: 5px solid #f8832a;
`;

const VScroll = styled.div`
    width: 16px;
    flex: none;
    display: flex;
    flex-direction: column;
    align-items: center;
    padding-top: ${p => p.$offset || 2}px;
    padding-bottom: 2px;
    i {
        width: 15px;
        margin-top: ${p => p.$before || 0}px;
        height: ${p => p.$size}px;
        background: #cdcdcd;
    }
    svg:last-child {
        margin-top: auto;
    }
`;

const HandleStrip = styled.div`
    height: 5px;
    flex: none;
    background: #f9f9f9;
    margin: 5px 0;
`;

const ButtonRow = styled.div`
    display: flex;
    gap: 12px;
    padding-left: 1px;
    margin-top: 10px;
    ${p => p.$end && "justify-content: flex-end;"}
`;

const DialogButton = styled.button`
    height: 22px;
    width: ${p => p.$width || 43}px;
    gap: 7px;
    border: 1px solid ${p => p.disabled ? "#bfbfbf" : "#adadad"};
    background: ${p => p.disabled ? "#cccccc" : "#e1e1e1"};
    ${p => p.$primary && "border: 2px solid #0078d7;"}
`;

const SplitButton = styled.div`
    display: flex;
    border: 1px solid #adadad;
    background: #e1e1e1;
    height: 22px;
    button {
        gap: 7px;
        width: 95px;
    }
    button + button {
        width: 21px;
        border-left: 1px solid #adadad;
        height: 16px;
        margin-top: 2px;
    }
`;

const Rule = styled.hr`
    width: 100%;
    border: 0;
    height: 1px;
    background: #9a9a9a;
    margin: 12px 0 2px;
    flex: none;
`;

const ViewToggle = styled.button`
    width: ${p => p.$on ? 23 : 17}px;
    height: 23px;
    ${p => p.$on && css`
        background: #bfdcf2;
        border: 1px solid #92c6ee;
    `}
`;

const SearchRow = styled.div`
    display: flex;
    align-items: center;
    gap: 4px;
    margin-bottom: 7px;
    padding-right: 3px;
`;

const ResizeGrip = styled.span`
    position: absolute;
    right: 2px;
    bottom: 2px;
`;

const combinations = [
    "A-00-All layers", "A-11-Site plan", "A-11-Site survey", "A-21-Concept plan", "A-21-Grid",
    "A-22-Concept section", "A-23-Concept elevation", "A-31-GA plan", "A-32-GA section",
    "A-33-GA elevation", "A-41-Detail plan", "A-42-Detail section", "A-43-Detail elevation",
    "A-43-Interior elevation", "A-44-RCP", "A-45-Floor Finishes", "A-45-Wall Finishes",
    "A-46 Strategy structure", "A-46-Strategy acoustic", "A-46-Strategy drainage"
];

const layers = [
    { name: "Exterior Walls", visible: true, group: 2, focused: true },
    { name: "Interior Walls", visible: false, group: 1 }
];

const LayerIcon = () => <Svg w={18} h={12}><path d="M7 1.500h10l-6 6H1z" fill="#fff" /><path d="M2 10.500h9l5-5" stroke={SOFT} strokeWidth="1.500" /></Svg>;
const LockIcon = () => <Svg w={16} h={16}><path d="M1 5V3q1.500-3 4 0v3M4.500 6h10v5q-1 4-5 4-4 0-5-4zM9.500 9v3" /></Svg>;
const SolidIcon = () => <Svg w={16} h={15} weight={1.4}><path d="M1.500 13.500V4l2-2.500h6V6h5v7.500zM1.500 4h6v4h4v5.500M7.500 4l2-2.500M11.500 8l3-2" fill="#fff" /></Svg>;
const IntersectIcon = () => <Svg w={18} h={13}><path d="M1 13V1h17M6 13V6h12" strokeWidth="1.300" /><path d="M1 6l5-5M5 6l5-5M9 6l5-5M13 6l5-5M1 11l5-5" strokeWidth="1" /></Svg>;

const LayersDialog = () => (
    <Dialog role="dialog" aria-label="Layers">
        <TitleBar>
            <Svg w={14} h={14} color="#3e62ad" weight={1.800}><path d="M2 13Q5 4 9 4l3 9z" fill="#e6ecf8" stroke="none" /><path d="M1 12Q4 1 9 1.500q3 0 3.500 3" /><path d="M12.500 7v2" /></Svg>
            <h1>Layers (Model Views)</h1>
            <button aria-label="Help">?</button>
            <button aria-label="Close"><Svg w={12} h={12} color="#000" weight={1.100}><path d="M1 1l10 10M11 1L1 11" /></Svg></button>
        </TitleBar>
        <DialogBody>
            <CombinationsPane>
                <PaneTitle>Layer Combinations</PaneTitle>
                <ListFrame>
                    <ListArea>
                        <CombinationTable>
                            <colgroup><col width="60%" /><col /></colgroup>
                            <thead><tr><th>Name</th><th>Status</th></tr></thead>
                            <tbody>
                                {combinations.map(c => <tr key={c}><td>{c}</td><td /></tr>)}
                            </tbody>
                        </CombinationTable>
                    </ListArea>
                    <VScroll $offset={21} $before={2} $size={189}><Chevron dir="up" /><i /><Chevron /></VScroll>
                </ListFrame>
                <ButtonRow>
                    <DialogButton $width={88}><PlusCircle />New...</DialogButton>
                    <DialogButton disabled aria-label="Rename"><Rename /></DialogButton>
                    <DialogButton disabled aria-label="Update"><Svg w={16} h={16} color="#86cba4"><circle cx="8" cy="8" r="7" /><path d="M4.500 8q.5-3 5-3M8 3.500L9.500 5 8 7M11.500 8q-.5 3-5 3M8 9l-1.500 2L8 12.500" /></Svg></DialogButton>
                    <DialogButton disabled aria-label="Delete"><Cross /></DialogButton>
                </ButtonRow>
            </CombinationsPane>
            <PaneSplitter><Svg w={5} h={8}><path d="M4.500 0v8L0 4z" fill="#222" stroke="none" /></Svg></PaneSplitter>
            <LayersPane>
                <PaneTitle>Layers</PaneTitle>
                <SearchRow>
                    <SearchBox $grow><Magnifier /><input placeholder="Search Layers" aria-label="Search Layers" /></SearchBox>
                    <ViewToggle $on aria-label="Tree view"><Svg w={18} h={16}><path d="M3 14.500H1.500V1.500h5L8 3.500h8V6M1.500 4H8" /><path d="M5 6v9M5 8.500h3M5 11.500h3M5 14.500h3" strokeWidth="1" /><path d="M9 8.500h8M9 11.500h8M9 14.500h8" strokeWidth="2" /></Svg></ViewToggle>
                    <ViewToggle aria-label="List view"><Svg w={17} h={12} weight={2}><path d="M0 2h2M4 2h13M0 6h2M4 6h13M0 10h2M4 10h13" /></Svg></ViewToggle>
                </SearchRow>
                <ListFrame $height={102}>
                    <ListArea as={Tree}>
                        {["Reference", "Revisions", "Site", "TEST"].map(f => (
                            <TreeRow key={f} $level={1} $selected={f === "TEST"}><i /><Folder fill="none" /><span>{f}</span></TreeRow>
                        ))}
                    </ListArea>
                    <VScroll $offset={3} $before={47} $size={23}><Chevron dir="up" /><i /><Chevron /></VScroll>
                </ListFrame>
                <HandleStrip />
                <ListFrame>
                    <ListArea>
                        <LayerTable>
                            <colgroup>
                                <col width="23" /><col width="25" /><col /><col width="85" /><col width="24" /><col width="24" /><col width="41" />
                            </colgroup>
                            <thead>
                                <tr>
                                    <th /><th />
                                    <th><div className="sorted">Name<Svg w={9} h={6}><path d="M0 6h9L4.500 0z" fill="#999" stroke="none" /></Svg></div></th>
                                    <th>Extension</th><th /><th /><th><IntersectIcon /></th>
                                </tr>
                            </thead>
                            <tbody>
                                {layers.map(l => (
                                    <LayerRow key={l.name} $focused={l.focused}>
                                        <td>{l.visible ? <Eye /> : <EyeOff />}</td>
                                        <td><LayerIcon /></td>
                                        <td>{l.name}</td>
                                        <td />
                                        <td><LockIcon /></td>
                                        <td><SolidIcon /></td>
                                        <td>{l.group}{l.focused && <Marker />}</td>
                                    </LayerRow>
                                ))}
                            </tbody>
                        </LayerTable>
                    </ListArea>
                    <VScroll $offset={21}><Chevron dir="up" color="#bbb" /><Chevron color="#bbb" /></VScroll>
                </ListFrame>
                <ButtonRow>
                    <SplitButton>
                        <button><PlusCircle />New</button>
                        <button aria-label="New options"><Caret /></button>
                    </SplitButton>
                    <DialogButton aria-label="New folder"><Svg w={18} h={16}><path d="M8 2.500H2v12h13V11M2 5h5" strokeWidth="1.400" /><circle cx="13" cy="5" r="4" stroke={BLUE} fill="#e4f0ff" /><path d="M13 3v4M11 5h4" stroke={BLUE} /></Svg></DialogButton>
                    <DialogButton disabled aria-label="Rename"><Rename /></DialogButton>
                    <DialogButton disabled aria-label="Delete"><Cross /></DialogButton>
                </ButtonRow>
                <Rule />
                <ButtonRow $end>
                    <DialogButton $width={88}>Cancel</DialogButton>
                    <DialogButton $width={88} $primary>OK</DialogButton>
                </ButtonRow>
            </LayersPane>
        </DialogBody>
        <ResizeGrip><Svg w={8} h={8}><path d="M6 0h2v2H6zM3 3h2v2H3zM6 3h2v2H6zM0 6h2v2H0zM3 6h2v2H3zM6 6h2v2H6z" fill="#b5b5b5" stroke="none" /></Svg></ResizeGrip>
    </Dialog>
);

const App = () => (
    <>
        <GlobalStyle />
        <Page>
            <MenuBar>
                {["File", "Edit", "View", "Design", "Document", "Options", "Teamwork", "Window", "Help"].map(m => (
                    <a href="#" key={m}>{m}</a>
                ))}
                <div className="window-buttons">
                    <Svg w={9} h={9} color="#999"><path d="M1 6h7" /></Svg>
                    <Svg w={9} h={9} color="#999"><path d="M1 3h5v5H1zM3 3V1h5v5H6" /></Svg>
                    <Svg w={9} h={9} color="#999"><path d="M1 1l7 7M8 1L1 8" /></Svg>
                </div>
            </MenuBar>
            <Toolbar>{tools.map((t, i) => <Tool key={i} id={t} />)}</Toolbar>
            <InfoSections />
            <Workspace>
                <PaletteTools />
                <Center>
                    <TabBar>
                        <TabIconCell $width={26} aria-label="Tab overview">
                            <Svg w={18} h={15} weight={1.3}><path d="M1 1h6v4.500H1zM11 1h6v4.500h-6zM1 9h6v4.500H1zM11 9h6v4.500h-6z" /></Svg>
                        </TabIconCell>
                        <Tab $active>
                            <Plan color={INK} />[0. GF-Ground Floor]
                            <Svg w={7} h={7} color="#222" weight={1.6}><path d="M.5 .5l6 6M6.500 .5l-6 6" /></Svg>
                        </Tab>
                        <Tab>
                            <Svg w={18} h={20}><path d="M2 19h12M4 19l2-11h4l2 11M5 8h6M6 8V4h4v4M5 4l3-2 3 2M7 19v-4h2v4M5 14l6-2" /><circle cx="15" cy="4" r="2.500" fill="#e8442a" stroke="none" /></Svg>
                            [Action Center]
                        </Tab>
                        <Tab><Box3D color={INK} />[3D / All]</Tab>
                        <TabFiller />
                        <TabIconCell $light $width={50} aria-label="View options">
                            <Svg w={23} h={16} weight={1.3}><path d="M1 12V6l4-4 5 4v6zM5 2h3l6 4v6h-4M10 6h4" /><path d="M16 9v2M16 13v2M19 11h4M19 14h4" strokeWidth="1.800" /></Svg>
                            <Caret />
                        </TabIconCell>
                    </TabBar>
                    <Drawing />
                    <QuickOptions />
                </Center>
                <NavigatorPanel />
            </Workspace>
            <StatusBar>
                Enter First Node of Wall.
                <Svg w={18} h={16} weight={1.4}><path d="M5 10H1.500V1.500H12V4M5 5h12v9.500H5zM5 7h12" /></Svg>
                <strong>GRAPHISOFT ID</strong>
            </StatusBar>
            <TaskStrip />
            <LayersDialog />
        </Page>
    </>
);

export default App;
